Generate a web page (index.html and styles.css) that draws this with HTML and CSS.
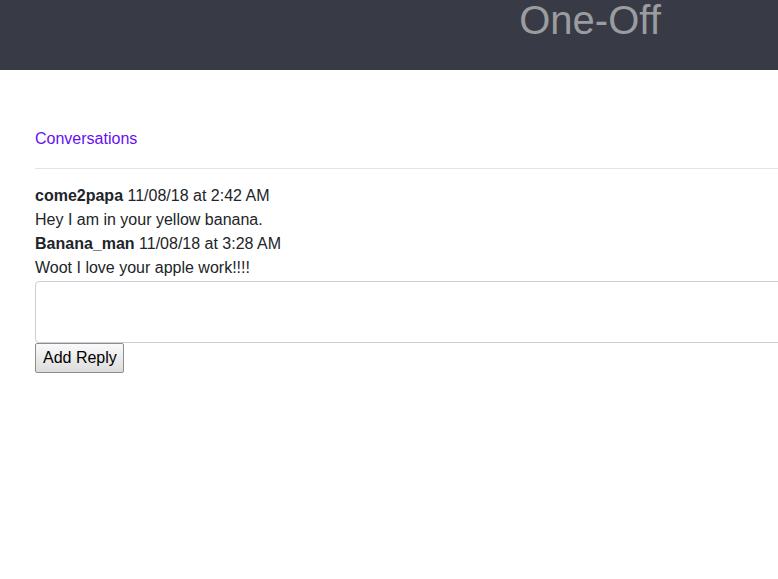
FILE: index.html
```html
<!DOCTYPE html>
<html lang="en">
<head>
<meta charset="utf-8">
<title>One-Off</title>
<link rel="stylesheet" href="styles.css">
</head>
<body>
<div class="page">
  <header class="topbar">
    <h1 class="brand">One-Off</h1>
  </header>
  <main class="content">
    <a class="conv-link" href="#">Conversations</a>
    <hr class="divider">
    <div class="thread">
      <div class="meta"><strong>come2papa</strong> 11/08/18 at 2:42 AM</div>
      <div class="msg">Hey I am in your yellow banana.</div>
      <div class="meta"><strong>Banana_man</strong> 11/08/18 at 3:28 AM</div>
      <div class="msg">Woot I love your apple work!!!!</div>
    </div>
    <form class="reply">
      <textarea class="reply-box"></textarea>
      <button type="button" class="reply-btn">Add Reply</button>
    </form>
  </main>
</div>
</body>
</html>
```

FILE: styles.css
```css
html, body {
  margin: 0;
  padding: 0;
  overflow: hidden;
  background: #fff;
}
body {
  font-family: "Liberation Sans", Arial, sans-serif;
  font-size: 16px;
  line-height: 24px;
  color: #212529;
}
.page {
  width: 1180px;
}
.topbar {
  background: #383a45;
  height: 70px;
  text-align: center;
}
.brand {
  margin: 0;
  font-weight: normal;
  font-size: 40px;
  line-height: 40px;
  color: #9b9c9f;
}
.content {
  padding: 57px 35px 0 35px;
}
.conv-link {
  color: #6610f2;
  text-decoration: none;
  display: inline-block;
}
.divider {
  margin: 17px 0 15px 0;
  border: 0;
  border-top: 1px solid #e2e3e5;
}
.reply {
  display: flex;
  flex-direction: column;
  align-items: flex-start;
  margin-top: 1px;
}
.reply-box {
  box-sizing: border-box;
  width: 1100px;
  height: 62px;
  border: 1px solid #cdced8;
  border-radius: 4px;
  margin: 0;
  resize: none;
  font: inherit;
}
.reply-btn {
  font-family: "Liberation Sans", Arial, sans-serif;
  font-size: 16px;
  line-height: 18px;
  white-space: nowrap;
  padding: 5px 6px 5px 7px;
  margin: 0;
  height: 30px;
  color: #000;
  background: linear-gradient(#fafafa, #dcdcdc);
  border: 1px solid #8e8e8e;
  border-radius: 2px;
}
```
